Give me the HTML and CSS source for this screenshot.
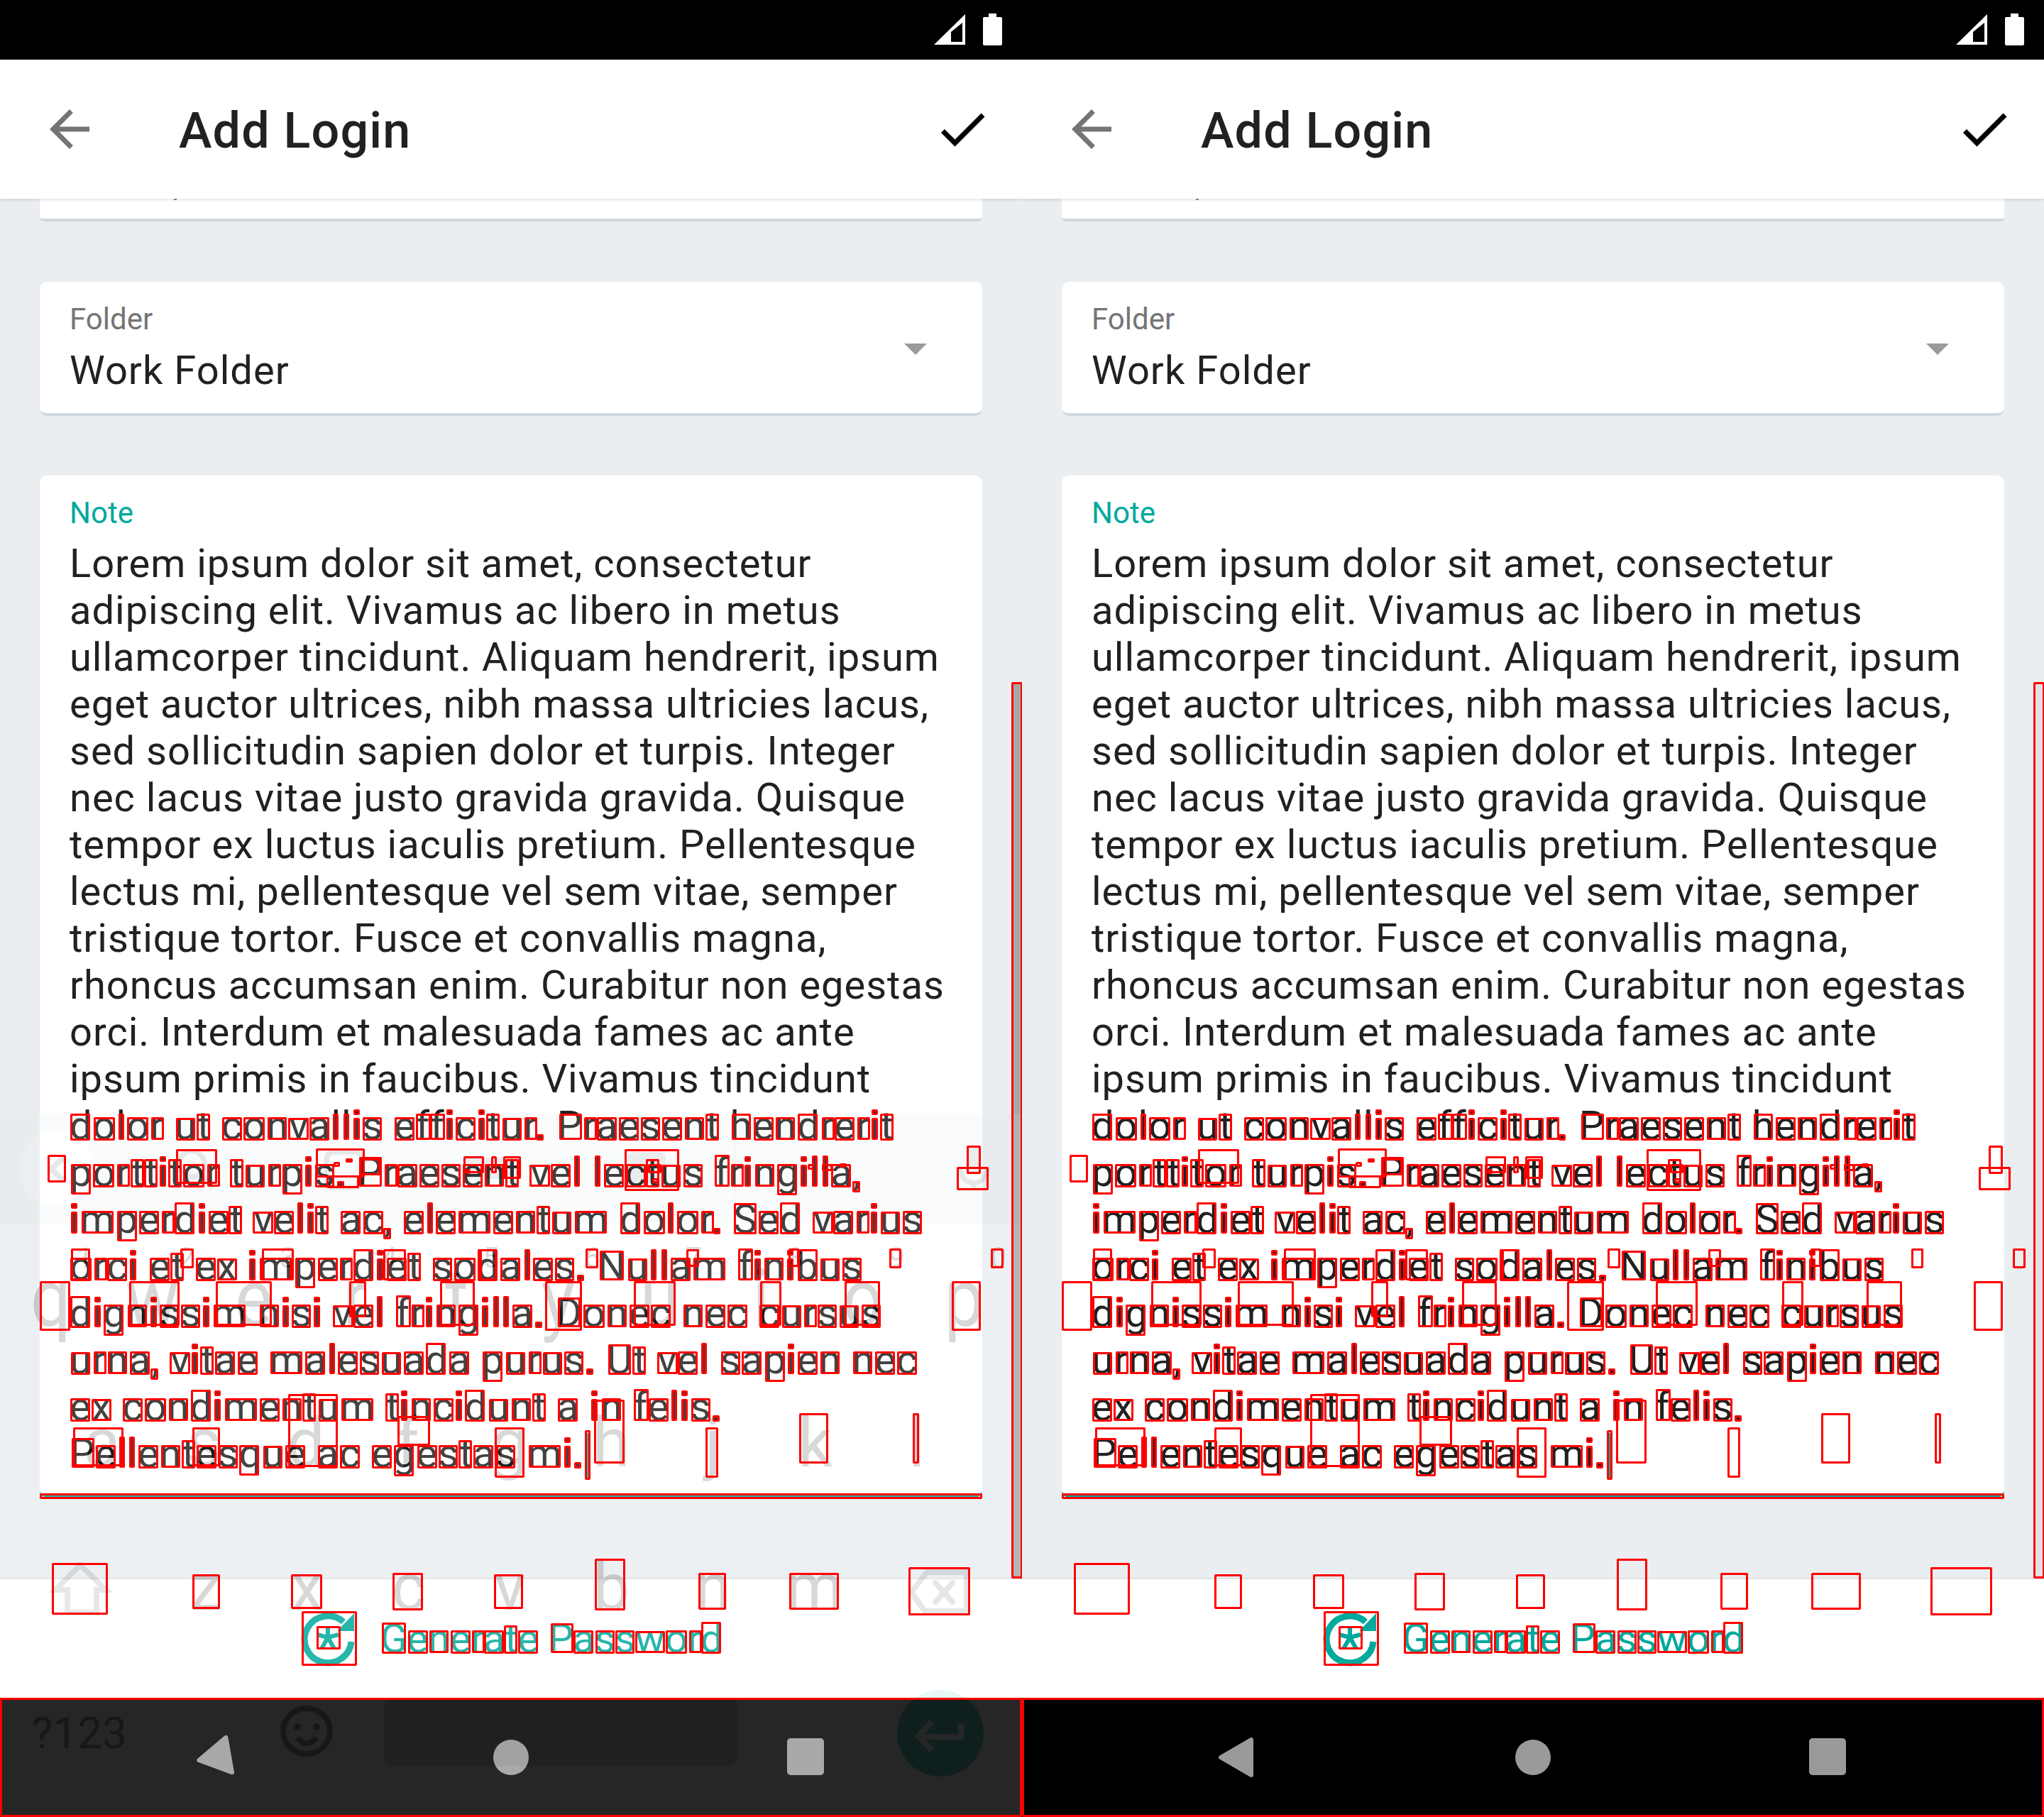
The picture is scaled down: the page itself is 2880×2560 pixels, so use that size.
FILE: index.html
```html
<!DOCTYPE html>
<html lang="en">
<head>
  <meta charset="UTF-8" />
  <title>Add Login</title>
  <link rel="stylesheet" href="styles.css">
</head>
<body>
  <div class="screens">

    <!-- left phone: keyboard is fading in over the form -->
    <div class="panel panel-typing">
      <div class="status-bar">
        <svg class="signal" viewBox="0 0 44 43"><path fill-rule="evenodd" d="M0 43L44 0V43ZM24 25V39H40V12Z"/></svg>
        <svg class="battery" viewBox="0 0 27 45"><path d="M8 0H19V5H25Q27 5 27 7V43Q27 45 25 45H2Q0 45 0 43V7Q0 5 2 5H8Z"/></svg>
      </div>
      <header class="toolbar">
        <svg class="icon back" viewBox="0 0 24 24"><path d="M20 11H7.83l5.59-5.59L12 4l-8 8 8 8 1.41-1.41L7.83 13H20v-2z"/></svg>
        <h1>Add Login</h1>
        <svg class="icon save" viewBox="0 0 24 24"><path d="M9 16.17L4.83 12l-1.42 1.41L9 19 21 7l-1.41-1.41z"/></svg>
      </header>
      <div class="content">
        <div class="card card-cut"><span class="cut-glyph"></span></div>
        <div class="card select">
          <div>
            <div class="label">Folder</div>
            <div class="value">Work Folder</div>
          </div>
          <span class="caret"></span>
        </div>
        <div class="card note">
          <div class="label label-active">Note</div>
          <div class="note-line">Lorem ipsum dolor sit amet, consectetur</div>
          <div class="note-line">adipiscing elit. Vivamus ac libero in metus</div>
          <div class="note-line">ullamcorper tincidunt. Aliquam hendrerit, ipsum</div>
          <div class="note-line">eget auctor ultrices, nibh massa ultricies lacus,</div>
          <div class="note-line">sed sollicitudin sapien dolor et turpis. Integer</div>
          <div class="note-line">nec lacus vitae justo gravida gravida. Quisque</div>
          <div class="note-line">tempor ex luctus iaculis pretium. Pellentesque</div>
          <div class="note-line">lectus mi, pellentesque vel sem vitae, semper</div>
          <div class="note-line">tristique tortor. Fusce et convallis magna,</div>
          <div class="note-line">rhoncus accumsan enim. Curabitur non egestas</div>
          <div class="note-line">orci. Interdum et malesuada fames ac ante</div>
          <div class="note-line">ipsum primis in faucibus. Vivamus tincidunt</div>
          <div class="note-line boxed">dolor ut convallis efficitur. Praesent hendrerit</div>
          <div class="note-line boxed">porttitor turpis. Praesent vel lectus fringilla,</div>
          <div class="note-line boxed">imperdiet velit ac, elementum dolor. Sed varius</div>
          <div class="note-line boxed">orci et ex imperdiet sodales. Nullam finibus</div>
          <div class="note-line boxed">dignissim nisi vel fringilla. Donec nec cursus</div>
          <div class="note-line boxed">urna, vitae malesuada purus. Ut vel sapien nec</div>
          <div class="note-line boxed">ex condimentum tincidunt a in felis.</div>
          <div class="note-line"><span class="boxed">Pellentesque ac egestas mi.</span><span class="cursor"></span></div>
        </div>
      </div>
      <div class="action-bar">
        <svg class="generate-icon" viewBox="0 0 84 84">
          <path class="ring" d="M73 46A33 33 0 1 1 62 18"/>
          <path class="ring-head" d="M77 6V31H53Z"/>
          <path class="star" d="M40 40V26M40 40L55 36M40 40L25 36M40 40L49 56M40 40L31 56"/>
        </svg>
        <span class="generate-text boxed">Generate Password</span>
      </div>
      <div class="nav-bar">
        <svg class="nav-icon nav-back" viewBox="0 0 84 84"><path d="M19 42L62 17V67Z"/></svg>
        <svg class="nav-icon" viewBox="0 0 84 84"><circle cx="42" cy="42" r="25"/></svg>
        <svg class="nav-icon" viewBox="0 0 84 84"><rect x="14" y="15" width="52" height="52" rx="5"/></svg>
      </div>
      <div class="scrollbar"></div>

      <div class="keyboard">
        <svg class="kb-art" viewBox="0 0 1440 991">
          <rect class="kb-strip" x="0" y="0" width="1440" height="155"/>
          <circle class="kb-back" cx="80" cy="77" r="53"/>
          <path class="kb-line" d="M90 62L72 78L90 95"/>
          <circle class="kb-line thin" cx="270" cy="71" r="18"/>
          <path class="kb-line thin" d="M283 85L300 104"/>
          <rect class="kb-line thin" x="460" y="54" width="50" height="50" rx="10"/>
          <rect class="kb-soft" x="655" y="62" width="80" height="30" rx="4"/>
          <rect class="kb-soft" x="884" y="54" width="54" height="50" rx="8"/>
          <path class="kb-rule" d="M1036 41V116"/>
          <circle class="kb-soft" cx="1142" cy="75" r="4"/>
          <circle class="kb-soft" cx="1166" cy="75" r="4"/>
          <rect class="kb-soft" x="1362" y="46" width="20" height="40" rx="10"/>
          <path class="kb-line thin" d="M1353 76C1353 105 1391 105 1391 76M1372 97V108"/>
          <path class="kb-line" d="M113 636L78 671H95V703H136V671H149Z"/>
          <path class="kb-line" d="M1284 674L1306 646H1362V701H1303Z"/>
          <path class="kb-line round" d="M1318 661L1342 688M1342 661L1318 688"/>
          <rect class="kb-space" x="541" y="823" width="499" height="96" rx="14"/>
          <ellipse class="kb-smile" cx="432" cy="870" rx="33" ry="32"/>
          <circle class="kb-smile-dot" cx="419" cy="864" r="5"/>
          <circle class="kb-smile-dot" cx="446" cy="864" r="5"/>
          <path class="kb-smile" d="M419 879Q432 896 446 879"/>
          <circle class="kb-enter" cx="1325" cy="873" r="61"/>
          <path class="kb-enter-arrow" d="M1354 859V878H1296M1313 857L1294 877L1313 897"/>
        </svg>
        <div class="kb-row kb-hints"><span>1</span><span>2</span><span>3</span><span>4</span><span>5</span><span>6</span><span>7</span><span>8</span><span>9</span><span>0</span></div>
        <div class="kb-row kb-top"><span>q</span><span>w</span><span>e</span><span>r</span><span>t</span><span>y</span><span>u</span><span>i</span><span>o</span><span>p</span></div>
        <div class="kb-row kb-home"><span>a</span><span>s</span><span>d</span><span>f</span><span>g</span><span>h</span><span>j</span><span>k</span><span>l</span></div>
        <div class="kb-row kb-low"><span>z</span><span>x</span><span>c</span><span>v</span><span>b</span><span>n</span><span>m</span></div>
        <div class="kb-row kb-symbols">?123</div>
      </div>
    </div>

    <!-- right phone: same form, keyboard hidden -->
    <div class="panel panel-plain">
      <div class="status-bar">
        <svg class="signal" viewBox="0 0 44 43"><path fill-rule="evenodd" d="M0 43L44 0V43ZM24 25V39H40V12Z"/></svg>
        <svg class="battery" viewBox="0 0 27 45"><path d="M8 0H19V5H25Q27 5 27 7V43Q27 45 25 45H2Q0 45 0 43V7Q0 5 2 5H8Z"/></svg>
      </div>
      <header class="toolbar">
        <svg class="icon back" viewBox="0 0 24 24"><path d="M20 11H7.83l5.59-5.59L12 4l-8 8 8 8 1.41-1.41L7.83 13H20v-2z"/></svg>
        <h1>Add Login</h1>
        <svg class="icon save" viewBox="0 0 24 24"><path d="M9 16.17L4.83 12l-1.42 1.41L9 19 21 7l-1.41-1.41z"/></svg>
      </header>
      <div class="content">
        <div class="card card-cut"><span class="cut-glyph"></span></div>
        <div class="card select">
          <div>
            <div class="label">Folder</div>
            <div class="value">Work Folder</div>
          </div>
          <span class="caret"></span>
        </div>
        <div class="card note">
          <div class="label label-active">Note</div>
          <div class="note-line">Lorem ipsum dolor sit amet, consectetur</div>
          <div class="note-line">adipiscing elit. Vivamus ac libero in metus</div>
          <div class="note-line">ullamcorper tincidunt. Aliquam hendrerit, ipsum</div>
          <div class="note-line">eget auctor ultrices, nibh massa ultricies lacus,</div>
          <div class="note-line">sed sollicitudin sapien dolor et turpis. Integer</div>
          <div class="note-line">nec lacus vitae justo gravida gravida. Quisque</div>
          <div class="note-line">tempor ex luctus iaculis pretium. Pellentesque</div>
          <div class="note-line">lectus mi, pellentesque vel sem vitae, semper</div>
          <div class="note-line">tristique tortor. Fusce et convallis magna,</div>
          <div class="note-line">rhoncus accumsan enim. Curabitur non egestas</div>
          <div class="note-line">orci. Interdum et malesuada fames ac ante</div>
          <div class="note-line">ipsum primis in faucibus. Vivamus tincidunt</div>
          <div class="note-line boxed">dolor ut convallis efficitur. Praesent hendrerit</div>
          <div class="note-line boxed">porttitor turpis. Praesent vel lectus fringilla,</div>
          <div class="note-line boxed">imperdiet velit ac, elementum dolor. Sed varius</div>
          <div class="note-line boxed">orci et ex imperdiet sodales. Nullam finibus</div>
          <div class="note-line boxed">dignissim nisi vel fringilla. Donec nec cursus</div>
          <div class="note-line boxed">urna, vitae malesuada purus. Ut vel sapien nec</div>
          <div class="note-line boxed">ex condimentum tincidunt a in felis.</div>
          <div class="note-line"><span class="boxed">Pellentesque ac egestas mi.</span><span class="cursor"></span></div>
        </div>
      </div>
      <div class="action-bar">
        <svg class="generate-icon" viewBox="0 0 84 84">
          <path class="ring" d="M73 46A33 33 0 1 1 62 18"/>
          <path class="ring-head" d="M77 6V31H53Z"/>
          <path class="star" d="M40 40V26M40 40L55 36M40 40L25 36M40 40L49 56M40 40L31 56"/>
        </svg>
        <span class="generate-text boxed">Generate Password</span>
      </div>
      <div class="nav-bar">
        <svg class="nav-icon" viewBox="0 0 84 84"><path d="M19 42L62 17V67Z"/></svg>
        <svg class="nav-icon" viewBox="0 0 84 84"><circle cx="42" cy="42" r="25"/></svg>
        <svg class="nav-icon" viewBox="0 0 84 84"><rect x="14" y="15" width="52" height="52" rx="5"/></svg>
      </div>
      <div class="scrollbar"></div>
    </div>

  </div>
  <script src="boxes.js"></script>
</body>
</html>
```

FILE: styles.css
```css
* {
  box-sizing: border-box;
}

body {
  margin: 0;
  font-family: Roboto, "Liberation Sans", sans-serif;
  font-variant-ligatures: none;
  color: #212121;
}

.screens {
  display: flex;
  width: 2880px;
  height: 2560px;
  overflow: hidden;
}

.panel {
  position: relative;
  flex: 0 0 1440px;
  height: 2560px;
  display: flex;
  flex-direction: column;
  overflow: hidden;
  background-color: #eaeef1;
}

.status-bar {
  flex: 0 0 84px;
  display: flex;
  justify-content: flex-end;
  align-items: flex-start;
  gap: 25px;
  padding: 19px 28px 0 0;
  background-color: #000;
}

.status-bar svg {
  fill: #fff;
}

.signal {
  width: 44px;
  height: 43px;
  margin-top: 1px;
}

.battery {
  width: 27px;
  height: 45px;
}

.toolbar {
  position: relative;
  z-index: 2;
  flex: 0 0 196px;
  display: flex;
  align-items: center;
  padding: 0 42px 0 56px;
  background-color: #fff;
  box-shadow: 0 1px 5px rgba(0,0,0,0.14);
}

.toolbar h1 {
  margin: 3px 0 0 112px;
  font-size: 70px;
  font-weight: 500;
  letter-spacing: 1.2px;
  color: #212121;
}

.icon {
  width: 84px;
  height: 84px;
}

.back {
  fill: #757575;
}

.save {
  margin-left: auto;
  fill: #000;
}

.content {
  flex: 1;
  padding: 0 56px;
  overflow: hidden;
}

.card {
  background-color: #fff;
  border-bottom: 4px solid #cfd8dc;
  border-radius: 10px;
}

.card-cut {
  height: 32px;
  padding-left: 189px;
  border-radius: 0 0 6px 6px;
}

.cut-glyph {
  display: block;
  width: 4px;
  height: 2px;
  background-color: #888;
}

.select {
  display: flex;
  justify-content: space-between;
  align-items: center;
  height: 189px;
  margin-top: 85px;
  padding: 28px 78px 0 42px;
}

.select > div {
  align-self: flex-start;
}

.label {
  font-size: 42px;
  line-height: 49px;
  color: #757575;
}

.label-active {
  color: #00a99d;
}

.value {
  margin-top: 15px;
  font-size: 56px;
  line-height: 66px;
  letter-spacing: 1.05px;
}

.caret {
  width: 0;
  height: 0;
  margin-top: -24px;
  border-left: 16px solid transparent;
  border-right: 16px solid transparent;
  border-top: 16px solid #9a9a9a;
}

.note {
  margin-top: 84px;
  padding: 28px 0 25px 42px;
  border-bottom-color: #00a99d;
}

.note .label {
  margin-bottom: 14px;
}

.note-line {
  height: 66px;
  font-size: 56px;
  line-height: 66px;
  letter-spacing: 1px;
  white-space: nowrap;
}

.cursor {
  display: inline-block;
  width: 4px;
  height: 66px;
  margin-left: 3px;
  vertical-align: -18px;
  background-color: #00a99d;
}

.action-bar {
  flex: 0 0 169px;
  display: flex;
  justify-content: center;
  align-items: center;
  gap: 30px;
  background-color: #fff;
  border-top: 2px solid #dfe2e4;
}

.generate-icon {
  width: 84px;
  height: 84px;
  fill: none;
}

.ring {
  stroke: #00a99d;
  stroke-width: 9;
}

.ring-head {
  fill: #00a99d;
}

.star {
  stroke: #00a99d;
  stroke-width: 6;
}

.generate-text {
  font-size: 56px;
  letter-spacing: -0.2px;
  color: #00a99d;
}

.nav-bar {
  flex: 0 0 168px;
  display: flex;
  justify-content: center;
  align-items: center;
  gap: 333px;
  background-color: #000;
}

.nav-icon {
  width: 84px;
  height: 84px;
  fill: #9a9a9a;
}

.nav-icon path {
  stroke: #9a9a9a;
  stroke-width: 6;
  stroke-linejoin: round;
}

.nav-back {
  transform: rotate(-10deg);
}

.scrollbar {
  position: absolute;
  top: 963px;
  left: 1428px;
  width: 10px;
  height: 1260px;
}

.panel-typing .scrollbar {
  background-color: #a8a8a8;
}

.panel-plain .scrollbar {
  background-color: #e0e3e6;
}

/* keyboard sliding in, drawn at 15% */
.keyboard {
  position: absolute;
  left: 0;
  right: 0;
  top: 1569px;
  bottom: 0;
  background-color: #fff;
  opacity: 0.15;
  color: #000;
}

.kb-art {
  position: absolute;
  left: 0;
  top: 0;
  width: 1440px;
  height: 991px;
  fill: none;
}

.kb-strip {
  fill: #e4e6e8;
}

.kb-back {
  fill: #fff;
}

.kb-line {
  stroke: #5f6368;
  stroke-width: 8;
}

.kb-line.thin {
  stroke-width: 7;
}

.kb-line.round {
  stroke-linecap: round;
}

.kb-soft {
  fill: #80868b;
}

.kb-rule {
  stroke: #bdc1c6;
  stroke-width: 2;
}

.kb-space {
  fill: #d2d5d8;
}

.kb-smile {
  stroke: #8c9aa0;
  stroke-width: 8;
}

.kb-smile-dot {
  fill: #8c9aa0;
}

.kb-enter {
  fill: #64cec8;
}

.kb-enter-arrow {
  stroke: #fff;
  stroke-width: 8;
}

.kb-row {
  position: relative;
  display: flex;
  text-align: center;
}

.kb-row span {
  flex: 0 0 143px;
}

.kb-hints {
  margin-top: 184px;
  padding-left: 48px;
  font-size: 40px;
  line-height: 40px;
}

.kb-top {
  margin-top: -9px;
  font-size: 100px;
  line-height: 100px;
  transform: scaleY(1.13);
  transform-origin: 0 84px;
}

.kb-home {
  margin-top: 101px;
  padding-left: 72px;
  font-size: 96px;
  line-height: 96px;
}

.kb-home span {
  flex-basis: 143.5px;
}

.kb-low {
  margin-top: 110px;
  padding-left: 218px;
  font-size: 92px;
  line-height: 92px;
}

.kb-symbols {
  margin-top: 128px;
  padding-left: 45px;
  font-size: 62px;
  line-height: 62px;
  color: #8c9aa0;
}

/* red debug boxes, placed by boxes.js */
.box-layer {
  position: absolute;
  inset: 0;
  z-index: 5;
  pointer-events: none;
}

.box {
  position: absolute;
  border: 3px solid #f00;
  border-radius: 2px;
}
```

FILE: boxes.js
```js
// x, y, width, height of the things that have no text to measure
const fixedBoxes = [
  // screen parts
  [0, 2392, 1440, 168], [56, 2104, 1328, 8], [1425, 961, 16, 1263], [824, 2015, 8, 70],
  [425, 2270, 78, 77], [446, 2291, 34, 33],
  // suggestion strip
  [67, 1627, 26, 39], [248, 1619, 58, 49], [445, 1618, 69, 41], [470, 1637, 9, 7], [487, 1632, 10, 6],
  [460, 1656, 46, 18], [507, 1632, 29, 24], [653, 1629, 29, 24], [692, 1629, 8, 24], [709, 1629, 25, 32],
  [657, 1647, 6, 7], [880, 1619, 77, 59], [913, 1640, 19, 13], [919, 1660, 9, 7],
  [1138, 1640, 9, 8], [1158, 1640, 15, 10], [1183, 1639, 10, 4], [1362, 1614, 20, 40], [1348, 1644, 45, 33],
  // digit hints
  [100, 1759, 27, 45], [254, 1759, 19, 28], [369, 1759, 45, 45], [540, 1760, 32, 44], [676, 1760, 24, 44],
  [825, 1759, 18, 28], [967, 1760, 18, 25], [1111, 1759, 15, 26], [1253, 1759, 17, 28], [1396, 1759, 18, 28],
  // top row
  [56, 1805, 43, 70], [182, 1805, 71, 63], [304, 1805, 79, 63], [492, 1805, 24, 51], [620, 1805, 49, 63],
  [768, 1805, 52, 70], [893, 1805, 59, 63], [1071, 1805, 30, 63], [1190, 1805, 50, 63], [1341, 1805, 41, 70],
  // home row
  [103, 2011, 71, 55], [271, 2011, 39, 55], [406, 1964, 70, 103], [560, 1995, 46, 42], [697, 2011, 42, 71],
  [837, 1972, 43, 90], [994, 2011, 18, 71], [1126, 1991, 41, 71], [1286, 1991, 9, 71],
  // bottom row
  [73, 2202, 79, 73], [271, 2218, 39, 49], [410, 2218, 44, 49], [553, 2216, 43, 53], [696, 2218, 41, 49],
  [838, 2196, 43, 73], [984, 2216, 39, 52], [1112, 2216, 70, 52], [1280, 2208, 87, 68],
];

const KEYBOARD_TOP = 1569; // boxes stop at the top of the keyboard window
const PAD = 1;
const ctx = document.createElement('canvas').getContext('2d');

function addBox(layer, x, y, w, h) {
  const box = document.createElement('div');
  box.className = 'box';
  box.style.left = `${x}px`;
  box.style.top = `${y}px`;
  box.style.width = `${w}px`;
  box.style.height = `${h}px`;
  layer.appendChild(box);
}

function boxText(layer, el, origin) {
  const node = el.firstChild;
  const style = getComputedStyle(el);
  const size = parseFloat(style.fontSize);
  // style.font is empty here because ligatures are switched off
  ctx.font = `${style.fontWeight} ${style.fontSize} Roboto`;
  const range = document.createRange();

  [...node.textContent].forEach((ch, i) => {
    if (ch === ' ') return;
    range.setStart(node, i);
    range.setEnd(node, i + 1);
    const rect = range.getBoundingClientRect();
    const m = ctx.measureText(ch);
    const base = rect.top + m.fontBoundingBoxAscent - origin.top;
    const left = rect.left - origin.left - m.actualBoundingBoxLeft - PAD;
    const width = m.actualBoundingBoxLeft + m.actualBoundingBoxRight + PAD * 2;
    const top = base - m.actualBoundingBoxAscent - PAD;
    const bottom = base + m.actualBoundingBoxDescent + PAD;

    if (ch === 'i' || ch === 'j') {
      // dot and stem come out as two separate boxes
      const stemTop = base - size * 0.54;
      addBox(layer, left, top, width, size * 0.14);
      addBox(layer, left, stemTop, width, bottom - stemTop);
      return;
    }
    const clipped = Math.max(top, KEYBOARD_TOP);
    addBox(layer, left, clipped, width, bottom - clipped);
  });
}

document.querySelectorAll('.panel').forEach(panel => {
  const layer = document.createElement('div');
  layer.className = 'box-layer';
  const origin = panel.getBoundingClientRect();
  panel.querySelectorAll('.boxed').forEach(el => boxText(layer, el, origin));
  fixedBoxes.forEach(b => addBox(layer, b[0], b[1], b[2], b[3]));
  panel.appendChild(layer);
});
```
